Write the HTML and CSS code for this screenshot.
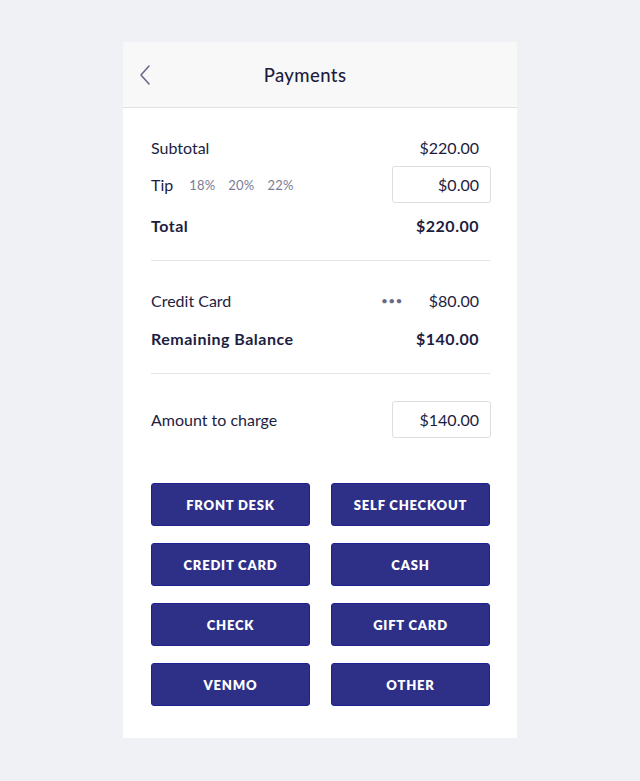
FILE: index.html
```html
<!DOCTYPE html>
<html>
<head>
<meta charset="utf-8">
<link rel="stylesheet" href="styles.css">
</head>
<body>
<div class="card">
  <div class="header">
    <svg class="back" width="14" height="22" viewBox="0 0 14 22"><path d="M11 2 L3 11 L11 20" fill="none" stroke="#6a6a88" stroke-width="1.6" stroke-linecap="round" stroke-linejoin="round"/></svg>
    <div class="title">Payments</div>
  </div>
  <div class="body">
    <div class="row r1"><span>Subtotal</span><span class="val">$220.00</span></div>
    <div class="row r2">
      <span class="tip">Tip <span class="pct">18%</span><span class="pct">20%</span><span class="pct">22%</span></span>
      <span class="input">$0.00</span>
    </div>
    <div class="row r3 bold"><span>Total</span><span class="val">$220.00</span></div>
    <div class="divider"></div>
    <div class="row r4"><span>Credit Card</span><span class="right"><span class="dots">•••</span><span class="val">$80.00</span></span></div>
    <div class="row r5 bold"><span>Remaining Balance</span><span class="val">$140.00</span></div>
    <div class="divider"></div>
    <div class="row r6"><span>Amount to charge</span><span class="input">$140.00</span></div>
    <div class="buttons">
      <div class="btn">FRONT DESK</div>
      <div class="btn">SELF CHECKOUT</div>
      <div class="btn">CREDIT CARD</div>
      <div class="btn">CASH</div>
      <div class="btn">CHECK</div>
      <div class="btn">GIFT CARD</div>
      <div class="btn">VENMO</div>
      <div class="btn">OTHER</div>
    </div>
  </div>
</div>
</body>
</html>
```
FILE: styles.css
```css
html, body { margin: 0; padding: 0; }
body {
  background: #f0f1f5;
  font-family: Lato, "Noto Sans", sans-serif;
  color: #1d1d3f;
  width: 640px;
  height: 781px;
}
.card {
  width: 394px;
  margin: 42px 0 0 123px;
  background: #ffffff;
  padding-bottom: 32px;
}
.header {
  height: 66px;
  background: #f8f8f8;
  border-bottom: 1px solid #e2e2e4;
  display: flex;
  align-items: center;
  justify-content: center;
  padding-right: 30px;
  position: relative;
  box-sizing: border-box;
}
.back { position: absolute; left: 15px; top: 22px; }
.title { font-size: 18.5px; font-weight: 500; color: #1d1d3f; letter-spacing: 0.4px; }
.body { padding: 0 26px 0 28px; }
.row {
  display: flex;
  justify-content: space-between;
  align-items: center;
  font-size: 16px;
}
.val { padding-right: 12px; }
.r1 { margin-top: 28px; height: 22px; }
.r2 { margin-top: 8px; height: 37px; }
.r3 { margin-top: 11px; height: 22px; }
.r4 { margin-top: 28px; height: 22px; }
.r5 { margin-top: 16px; height: 22px; }
.r6 { margin-top: 27px; height: 37px; }
.bold { font-weight: 700; letter-spacing: 0.5px; }
.tip { display: flex; align-items: center; }
.pct { font-size: 13px; color: #7b7b95; margin-left: 13px; letter-spacing: 0.2px; }
.pct:first-child { margin-left: 16px; }
.input {
  width: 99px;
  height: 37px;
  box-sizing: border-box;
  border: 1px solid #dedee2;
  border-radius: 3px;
  display: flex;
  align-items: center;
  justify-content: flex-end;
  padding-right: 11px;
}
.right { display: flex; align-items: center; }
.dots { color: #6a6a88; font-size: 12px; letter-spacing: 0.3px; margin-right: 26px; }
.divider { height: 1px; background: #e4e4e8; margin-top: 24px; margin-right: 1px; }
.buttons {
  margin-top: 45px;
  display: grid;
  grid-template-columns: 159px 159px;
  column-gap: 21px;
  row-gap: 17px;
}
.btn {
  height: 43px;
  box-sizing: border-box;
  background: #2e3088;
  border: 1px solid #1e2090;
  border-radius: 3px;
  color: #ffffff;
  font-weight: 800;
  font-size: 13px;
  letter-spacing: 0.8px;
  display: flex;
  align-items: center;
  justify-content: center;
}
```
